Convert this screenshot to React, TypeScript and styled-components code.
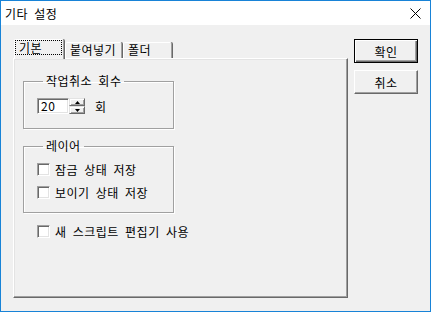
import * as React from 'react'
import styled, { createGlobalStyle } from 'styled-components'

const GlobalStyle = createGlobalStyle`
  body {
    margin: 0;
    font-family: "Noto Sans CJK KR", "Noto Sans", sans-serif;
    font-size: 12px;
    letter-spacing: 0.5px;
    color: #000000;
  }
`

const tabs = ['기본', '붙여넣기', '폴더']
const tabWidths = [50, 57, 49]

const App: React.FC = () => {
  return (
    <Window>
      <GlobalStyle />
      <TitleBar>
        <Title>기타 설정</Title>
        <svg width="11" height="11" viewBox="0 0 11 11">
          <path d="M0.5 0.5 L10.5 10.5 M10.5 0.5 L0.5 10.5" stroke="#000" strokeWidth="1" />
        </svg>
      </TitleBar>
      <Body>
        <TabArea>
          <TabStrip>
            {tabs.map((t, i) => (
              <Tab key={t} $active={i === 0} $width={tabWidths[i]}>
                {i === 0 ? <Focus>{t}</Focus> : t}
              </Tab>
            ))}
          </TabStrip>
          <Panel>
            <Group>
              <Legend>작업취소 회수</Legend>
              <SpinRow>
                <SpinInput>20</SpinInput>
                <SpinButtons>
                  <SpinButton>
                    <svg width="5" height="3" viewBox="0 0 5 3">
                      <path d="M2.5 0 L5 3 L0 3 Z" fill="#000" />
                    </svg>
                  </SpinButton>
                  <SpinButton>
                    <svg width="5" height="3" viewBox="0 0 5 3">
                      <path d="M0 0 L5 0 L2.5 3 Z" fill="#000" />
                    </svg>
                  </SpinButton>
                </SpinButtons>
                <Unit>회</Unit>
              </SpinRow>
            </Group>
            <Group $gap={10}>
              <Legend>레이어</Legend>
              <CheckRow>
                <Box />
                잠금 상태 저장
              </CheckRow>
              <CheckRow $last>
                <Box />
                보이기 상태 저장
              </CheckRow>
            </Group>
            <OuterCheck>
              <Box />새 스크립트 편집기 사용
            </OuterCheck>
          </Panel>
        </TabArea>
        <Buttons>
          <Button $default>확인</Button>
          <Button>취소</Button>
        </Buttons>
      </Body>
    </Window>
  )
}

const Window = styled.div`
  width: 431px;
  height: 312px;
  box-sizing: border-box;
  border: 1px solid #1883d7;
  background: #f0f0f0;
  display: flex;
  flex-direction: column;
`
const TitleBar = styled.div`
  height: 24px;
  background: #ffffff;
  display: flex;
  align-items: center;
  justify-content: space-between;
  padding: 0 9px 0 4px;
`
const Title = styled.span`
  font-size: 12px;
  word-spacing: 3px;
`
const Body = styled.div`
  display: flex;
  gap: 6px;
  padding: 14px 0 0 12px;
`
const TabArea = styled.div`
  width: 335px;
  display: flex;
  flex-direction: column;
`
const TabStrip = styled.div`
  height: 19px;
  display: flex;
  align-items: flex-end;
  padding-left: 1px;
`
const Tab = styled.div<{ $active?: boolean; $width: number }>`
  position: relative;
  z-index: ${p => (p.$active ? 2 : 1)};
  box-sizing: border-box;
  width: ${p => p.$width}px;
  height: ${p => (p.$active ? 20 : 16)}px;
  margin-bottom: ${p => (p.$active ? -1 : 0)}px;
  margin-right: 1px;
  padding: ${p => (p.$active ? '0 0 0 1px' : '0 0 0 4px')};
  background: #f0f0f0;
  border-top: 1px solid #ffffff;
  border-left: 1px solid #ffffff;
  border-right: 1px solid #a0a0a0;
  box-shadow: 1px 0 0 #696969;
  border-radius: 2px 2px 0 0;
  line-height: 14px;
  word-spacing: 3px;
`
const Focus = styled.span`
  display: block;
  width: 42px;
  height: 13px;
  margin-top: 1px;
  padding-left: 3px;
  outline: 1px dotted #000000;
  line-height: 13px;
`
const Panel = styled.div`
  position: relative;
  z-index: 1;
  box-sizing: border-box;
  height: 240px;
  border: 1px solid;
  border-color: #ffffff #696969 #696969 #ffffff;
  box-shadow: inset -1px -1px 0 #a0a0a0, inset 1px 1px 0 #e3e3e3;
  padding: 15px 0 0 9px;
  display: flex;
  flex-direction: column;
`
const Group = styled.fieldset<{ $gap?: number }>`
  box-sizing: border-box;
  width: 151px;
  margin: ${p => p.$gap || 0}px 0 0 0;
  padding: 9px 0 12px 13px;
  border: 1px solid #a0a0a0;
  box-shadow: 1px 1px 0 #ffffff, inset 1px 1px 0 #ffffff;
  min-inline-size: 0;
`
const Legend = styled.legend`
  padding: 0 3px;
  margin-left: 6px;
  line-height: 14px;
  word-spacing: 3px;
`
const SpinRow = styled.div`
  display: flex;
  align-items: center;
  height: 16px;
  margin-top: 1px;
  margin-bottom: 2px;
`
const sunken = `
  box-sizing: border-box;
  background: #ffffff;
  border: 1px solid;
  border-color: #a0a0a0 #ffffff #ffffff #a0a0a0;
  box-shadow: inset 1px 1px 0 #696969, inset -1px -1px 0 #e3e3e3;
`
const SpinInput = styled.div`
  ${sunken}
  width: 32px;
  height: 16px;
  padding-left: 3px;
  line-height: 14px;
`
const SpinButtons = styled.div`
  display: flex;
  flex-direction: column;
  width: 16px;
  height: 16px;
`
const SpinButton = styled.div`
  flex: 1;
  box-sizing: border-box;
  display: flex;
  align-items: center;
  justify-content: center;
  background: #f0f0f0;
  border: 1px solid;
  border-color: #e3e3e3 #696969 #696969 #e3e3e3;
  box-shadow: inset 1px 1px 0 #ffffff, inset -1px -1px 0 #a0a0a0;
`
const Unit = styled.span`
  margin-left: 10px;
`
const CheckRow = styled.label<{ $last?: boolean }>`
  display: flex;
  align-items: center;
  gap: 5px;
  height: 15px;
  margin-bottom: ${p => (p.$last ? 0 : 8)}px;
  word-spacing: 3px;
`
const OuterCheck = styled(CheckRow)`
  margin-top: 11px;
  padding-left: 14px;
`
const Box = styled.span`
  ${sunken}
  width: 13px;
  height: 13px;
  flex: none;
`
const Buttons = styled.div`
  display: flex;
  flex-direction: column;
  gap: 7px;
  width: 64px;
`
const Button = styled.div<{ $default?: boolean }>`
  box-sizing: border-box;
  height: 24px;
  display: flex;
  align-items: center;
  justify-content: center;
  background: #f0f0f0;
  border: 1px solid;
  border-color: ${p => (p.$default ? '#000000' : '#ffffff #696969 #696969 #ffffff')};
  box-shadow: ${p =>
    p.$default
      ? 'inset 1px 1px 0 #ffffff, inset -1px -1px 0 #696969, inset -2px -2px 0 #a0a0a0'
      : 'inset -1px -1px 0 #a0a0a0'};
`

export default App
